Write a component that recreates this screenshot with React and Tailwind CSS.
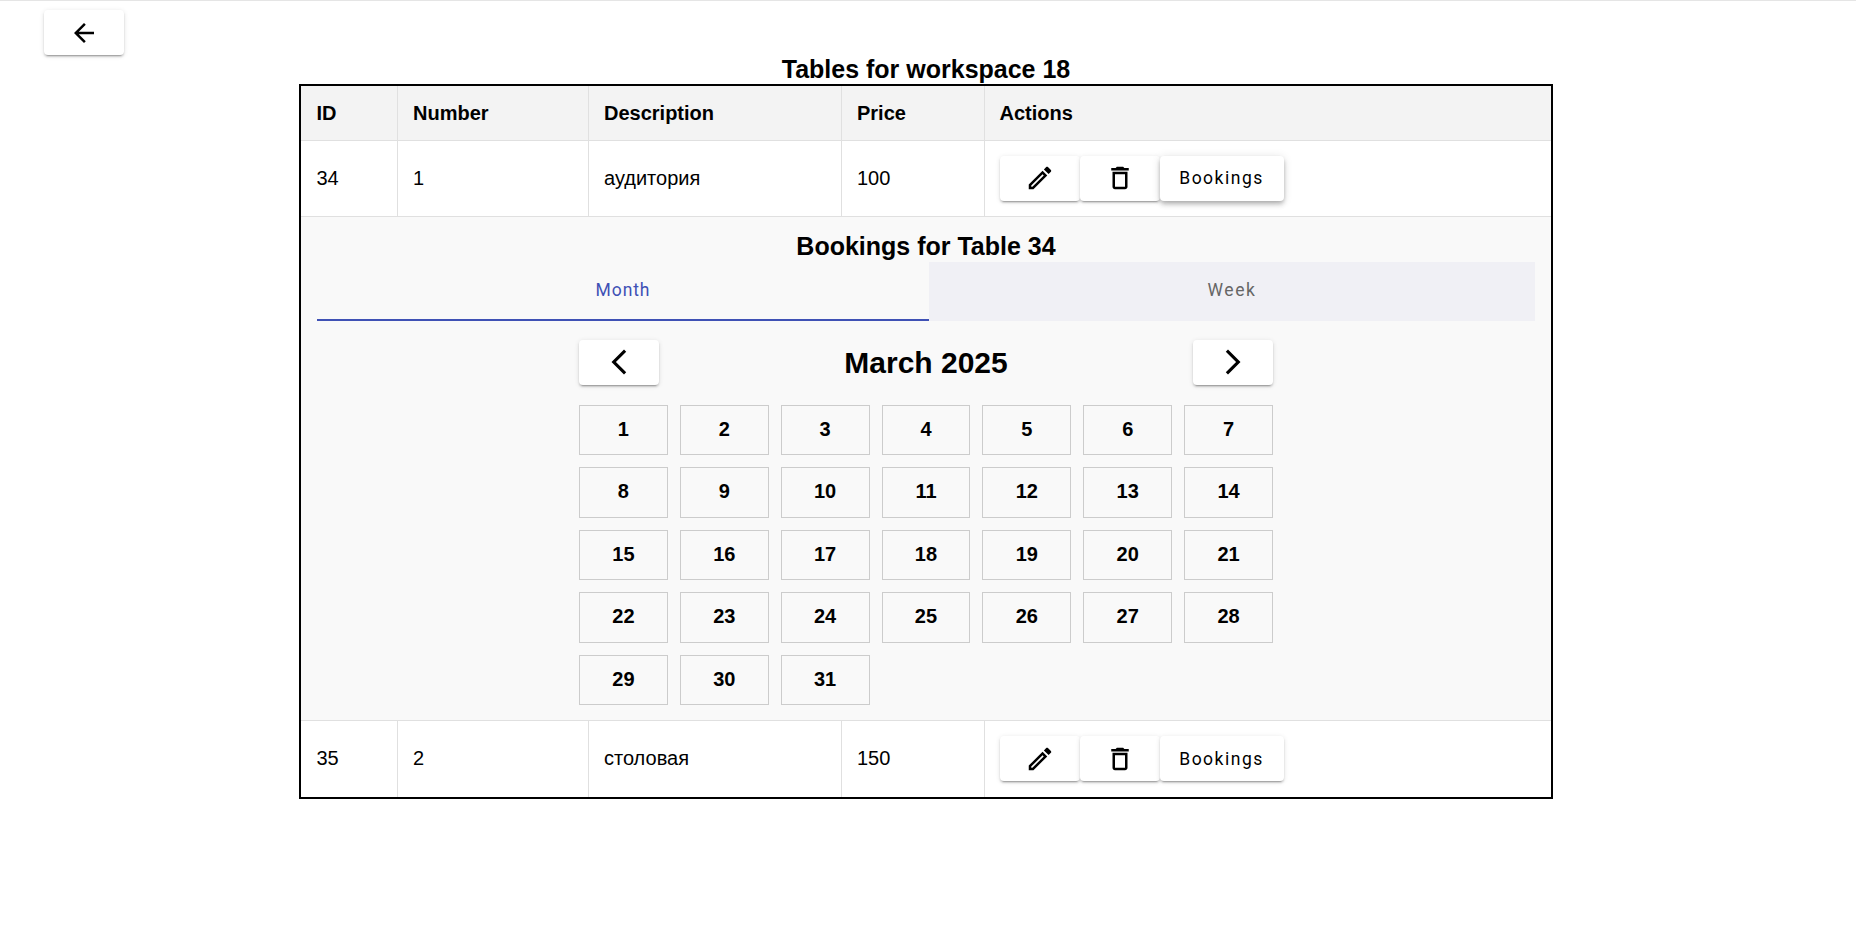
const editPath = 'M14.06 9.02l.92.92L5.92 19H5v-.92l9.06-9.06M17.66 3c-.25 0-.51.1-.7.29l-1.83 1.83 3.75 3.75 1.83-1.83c.39-.39.39-1.02 0-1.41l-2.34-2.34c-.2-.2-.45-.29-.71-.29zm-3.6 3.19L3 17.25V21h3.75L17.81 9.94l-3.75-3.75z';
const deletePath = 'M6 19c0 1.1.9 2 2 2h8c1.1 0 2-.9 2-2V7H6v12zM8 9h8v10H8V9zm7.5-5l-1-1h-5l-1 1H5v2h14V4h-3.5z';

const Icon = ({ d }) => (
  <svg className="h-[30px] w-[30px] fill-black" viewBox="0 0 24 24" aria-hidden="true">
    <path d={d} />
  </svg>
);

const base = 'flex items-center justify-center rounded bg-white text-black';
const flat = 'shadow-[0_3px_1px_-2px_rgba(0,0,0,0.2),0_2px_2px_0_rgba(0,0,0,0.14),0_1px_5px_0_rgba(0,0,0,0.12)]';
const lifted = 'shadow-[0_2px_4px_-1px_rgba(0,0,0,0.2),0_4px_5px_0_rgba(0,0,0,0.14),0_1px_10px_0_rgba(0,0,0,0.12)]';
const btn = `${base} ${flat}`;
const th = 'border-r border-b border-[#e0e0e0] pl-[15.5px] pr-4 text-left align-middle font-bold';
const td = 'border-r border-b border-[#e0e0e0] pl-[15.5px] pr-4 align-middle font-normal';

const days = Array.from({ length: 31 }, (_, i) => i + 1);

function Actions({ raised }) {
  return (
    <div className="flex font-['Roboto',sans-serif]">
      <button className={`${btn} h-[45px] w-20`}><Icon d={editPath} /></button>
      <button className={`${btn} h-[45px] w-20`}><Icon d={deletePath} /></button>
      <button className={`${base} ${raised ? lifted : flat} h-[45px] w-[124px] text-[17.5px] tracking-[1.5px]`}>Bookings</button>
    </div>
  );
}

function Row({ id, number, description, price, raised, last }) {
  const extra = last ? 'pb-0.5' : '';
  return (
    <tr className={last ? 'h-[77px]' : 'h-[76px]'}>
      <td className={`${td} pl-4 ${extra}`}>{id}</td>
      <td className={`${td} ${extra}`}>{number}</td>
      <td className={`${td} ${extra}`}>{description}</td>
      <td className={`${td} ${extra}`}>{price}</td>
      <td className="border-b border-[#e0e0e0] pl-[15px] pr-4 align-middle"><Actions raised={raised} /></td>
    </tr>
  );
}

export default function App() {
  return (
    <div className="min-h-[932px] border-t border-[#e5e5e5] bg-white font-['Liberation_Sans',Arial,sans-serif] text-black">
      <button className={`${btn} ml-11 mt-[9px] h-[45px] w-20`}>
        <Icon d="M20 11H7.83l5.59-5.59L12 4l-8 8 8 8 1.41-1.41L7.83 13H20v-2z" />
      </button>
      <div className="ml-[299px] w-[1254px]">
        <h2 className="h-[29px] text-center text-[25px] leading-[29px] font-bold">Tables for workspace 18</h2>
        <table className="w-full table-fixed border-collapse border-2 border-black text-xl">
          <colgroup>
            <col className="w-[97px]" />
            <col className="w-[191px]" />
            <col className="w-[253px]" />
            <col className="w-[143px]" />
            <col />
          </colgroup>
          <thead>
            <tr className="h-[55px] bg-[#f3f3f3]">
              <th className={`${th} pl-4`}>ID</th>
              <th className={th}>Number</th>
              <th className={th}>Description</th>
              <th className={th}>Price</th>
              <th className="border-b border-[#e0e0e0] pl-[15px] pr-4 text-left font-bold">Actions</th>
            </tr>
          </thead>
          <tbody>
            <Row id={34} number={1} description="аудитория" price={100} raised />
            <tr>
              <td colSpan={5} className="border-b border-[#e0e0e0] bg-[#f9f9f9] px-4 pt-4 pb-[15px]">
                <h3 className="h-[29px] text-center text-[25px] leading-[27px] font-bold">Bookings for Table 34</h3>
                <div className="flex h-[59px] font-['Roboto',sans-serif] text-[17.5px] tracking-[0.9px]">
                  <div className="flex w-[612px] items-center justify-center border-b-2 border-[#3f51b5] text-[#3f51b5]">Month</div>
                  <div className="flex flex-1 items-center justify-center bg-[#f0f0f5] pb-0.5 tracking-[1.6px] text-[#666666]">Week</div>
                </div>
                <div className="mx-auto mt-[19px] w-[694px]">
                  <div className="flex items-center justify-between">
                    <button className={`${btn} h-[45px] w-20`}><Icon d="M17.77 3.77 16 2 6 12l10 10 1.77-1.77L9.54 12z" /></button>
                    <h2 className="pt-px text-3xl font-bold">March 2025</h2>
                    <button className={`${btn} h-[45px] w-20`}><Icon d="M6.23 20.23 8 22l10-10L8 2 6.23 3.77 14.46 12z" /></button>
                  </div>
                  <div className="mt-5 grid grid-cols-7 gap-x-3 gap-y-3">
                    {days.map((day) => (
                      <div key={day} className="flex h-[50.5px] items-center justify-center border border-[#cccccc] pb-0.5 text-xl font-bold">{day}</div>
                    ))}
                  </div>
                </div>
              </td>
            </tr>
            <Row id={35} number={2} description="столовая" price={150} last />
          </tbody>
        </table>
      </div>
    </div>
  );
}
